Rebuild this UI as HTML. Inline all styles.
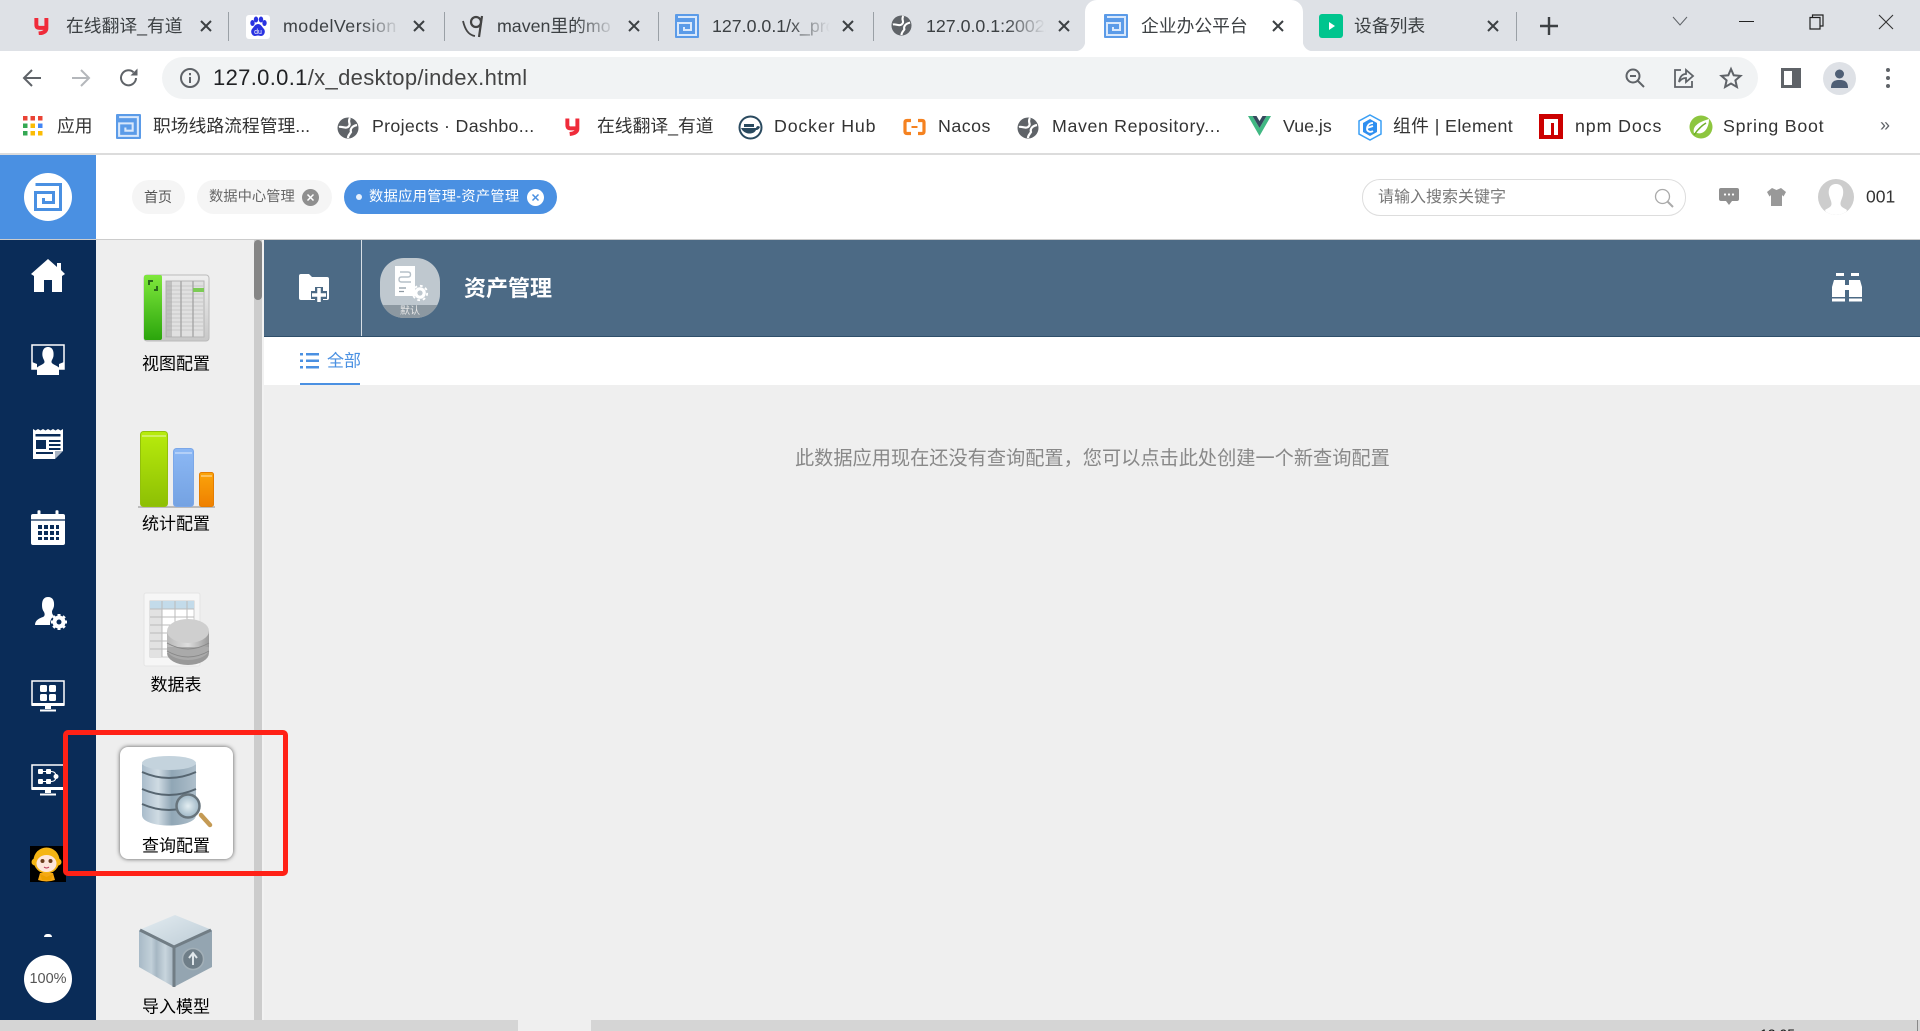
<!DOCTYPE html>
<html lang="zh">
<head>
<meta charset="utf-8">
<title>企业办公平台</title>
<style>
html,body{margin:0;padding:0;width:1920px;height:1031px;overflow:hidden;background:#efefef;}
body{position:relative;font-family:"Liberation Sans","Noto Sans CJK SC",sans-serif;color:#333;}
.a{position:absolute;}
.t{position:absolute;white-space:nowrap;line-height:1;transform:translateY(-50%);}
.tab{font-size:17.800px;color:#3c4043;top:27px;}
.bm{font-size:17.800px;color:#333;top:127px;}
.x{position:absolute;top:18px;width:16px;height:16px;}
.sep{position:absolute;top:12px;width:1px;height:29px;background:#9aa0a6;}
.lb{position:absolute;left:97px;width:158px;text-align:center;font-size:17px;line-height:1;color:#000;transform:translateY(-50%);white-space:nowrap;}
svg{position:absolute;display:block;overflow:visible;}
.fade{position:absolute;top:12px;height:30px;width:40px;background:linear-gradient(90deg,rgba(222,225,230,0),#dee1e6);}
</style>
</head>
<body>
<svg width="0" height="0" style="position:absolute">
<defs>
<symbol id="closex" viewBox="0 0 16 16"><path d="M3 3L13 13M13 3L3 13" stroke="#3c4043" stroke-width="2" fill="none"/></symbol>
<symbol id="o2" viewBox="0 0 24 24"><rect width="24" height="24" fill="#5b9be8" rx="1"/><path d="M3 3H21V21H3V9H16V16H9V13" fill="none" stroke="#d9e8fb" stroke-width="2"/></symbol>
<symbol id="globe" viewBox="0 0 22 22"><circle cx="11" cy="11" r="10.500" fill="#5f6368"/><path d="M13 1C10 5 15 7 11 10C8 12 5 9 2 10M20 8C15 9 13 12 14 15C13 17 11 18 11 21" fill="none" stroke="#fff" stroke-width="2.200"/></symbol>
<symbol id="yd" viewBox="0 0 16 19"><path d="M2.500 1V8Q2.500 11.500 6 11.500H13M13.200 1V12Q13.200 16.500 5 17.500" fill="none" stroke="#ef2b3a" stroke-width="4.200"/></symbol>
</defs>
</svg>

<!-- tab strip -->
<div class="a" style="left:0;top:0;width:1920px;height:51px;background:#dee1e6"></div>
<div class="a" style="left:1085px;top:0;width:218px;height:52px;background:#fff;border-radius:12px 12px 0 0"></div>
<div class="a" style="left:1075px;top:41px;width:10px;height:10px;background:radial-gradient(circle at 0 0,#dee1e6 10px,#fff 10.500px)"></div>
<div class="a" style="left:1303px;top:41px;width:10px;height:10px;background:radial-gradient(circle at 100% 0,#dee1e6 10px,#fff 10.500px)"></div>
<div class="sep" style="left:228px"></div><div class="sep" style="left:444px"></div><div class="sep" style="left:658px"></div><div class="sep" style="left:873px"></div><div class="sep" style="left:1516px"></div>

<svg style="left:34px;top:17px" width="15" height="18"><use href="#yd" width="15" height="18"/></svg>
<div class="t tab" style="left:66px">在线翻译_有道</div>
<svg class="x" style="left:198px"><use href="#closex" width="16" height="16"/></svg>

<svg style="left:246px;top:15px" width="24" height="24" viewBox="0 0 24 24"><rect width="24" height="24" rx="3" fill="#fff"/><g fill="#2932e1"><ellipse cx="6.500" cy="8" rx="2.200" ry="3"/><ellipse cx="10" cy="4.500" rx="2.200" ry="3"/><ellipse cx="15" cy="4.500" rx="2.200" ry="3"/><ellipse cx="18.500" cy="8" rx="2.200" ry="3"/><path d="M12 9c3 0 4 3 6 5 2 3 0 7-3 7-1 0-2-.5-3-.5S10 21 9 21c-3 0-5-4-3-7 2-2 3-5 6-5z"/></g><text x="12" y="19" font-size="7" fill="#fff" text-anchor="middle" font-family="Liberation Sans">du</text></svg>
<div class="t tab" style="left:283px;width:118px;overflow:hidden;padding:2px 0;letter-spacing:.5px">modelVersion</div>
<div class="fade" style="left:361px"></div>
<svg class="x" style="left:411px"><use href="#closex" width="16" height="16"/></svg>

<svg style="left:462px;top:14px" width="22" height="25" viewBox="0 0 22 25"><path d="M1 7C3 15 6 21 13 22" fill="none" stroke="#444" stroke-width="1.800"/><circle cx="14" cy="8" r="5" fill="none" stroke="#444" stroke-width="2.200"/><path d="M20 2L17 23" fill="none" stroke="#444" stroke-width="2.200"/></svg>
<div class="t tab" style="left:497px;width:118px;overflow:hidden;padding:2px 0">maven里的mo</div>
<div class="fade" style="left:576px"></div>
<svg class="x" style="left:626px"><use href="#closex" width="16" height="16"/></svg>

<svg style="left:675px;top:14px" width="24" height="24"><use href="#o2" width="24" height="24"/></svg>
<div class="t tab" style="left:712px;width:118px;overflow:hidden;padding:2px 0">127.0.0.1/x_pro</div>
<div class="fade" style="left:790px"></div>
<svg class="x" style="left:840px"><use href="#closex" width="16" height="16"/></svg>

<svg style="left:891px;top:15px" width="21" height="21"><use href="#globe" width="21" height="21"/></svg>
<div class="t tab" style="left:926px;width:120px;overflow:hidden;padding:2px 0">127.0.0.1:2002/</div>
<div class="fade" style="left:1006px"></div>
<svg class="x" style="left:1056px"><use href="#closex" width="16" height="16"/></svg>

<svg style="left:1104px;top:14px" width="24" height="24"><use href="#o2" width="24" height="24"/></svg>
<div class="t tab" style="left:1141px">企业办公平台</div>
<svg class="x" style="left:1270px"><use href="#closex" width="16" height="16"/></svg>

<svg style="left:1319px;top:14px" width="24" height="24" viewBox="0 0 24 24"><rect width="24" height="24" rx="3" fill="#00c58e"/><path d="M10 8L16 12L10 16Z" fill="#fff"/></svg>
<div class="t tab" style="left:1354px">设备列表</div>
<svg class="x" style="left:1485px"><use href="#closex" width="16" height="16"/></svg>

<svg style="left:1540px;top:17px" width="18" height="18"><path d="M9 0V18M0 9H18" stroke="#3c4043" stroke-width="2.400"/></svg>
<svg style="left:1672px;top:16px" width="16" height="10"><path d="M1 1L8 9L15 1" fill="none" stroke="#5f6368" stroke-width="1"/></svg>
<div class="a" style="left:1739px;top:21px;width:15px;height:1px;background:#222"></div>
<svg style="left:1809px;top:14px" width="16" height="16"><path d="M3.500 3V1H14V12H11.500M1 3.500H11V15H1Z" fill="none" stroke="#222" stroke-width="1.200"/></svg>
<svg style="left:1878px;top:14px" width="16" height="16"><path d="M1 1L15 15M15 1L1 15" stroke="#333" stroke-width="1.100"/></svg>

<!-- toolbar -->
<div class="a" style="left:0;top:51px;width:1920px;height:102px;background:#fff"></div>
<svg style="left:22px;top:68px" width="20" height="20"><path d="M19 10H3M10 2L2 10L10 18" fill="none" stroke="#5f6368" stroke-width="2"/></svg>
<svg style="left:71px;top:68px" width="20" height="20"><path d="M1 10H17M10 2L18 10L10 18" fill="none" stroke="#b4b7bb" stroke-width="2"/></svg>
<svg style="left:119px;top:68px" width="20" height="20"><path d="M17 10A7.500 7.500 0 1 1 14.500 4.200" fill="none" stroke="#5f6368" stroke-width="2"/><path d="M11.500 7.500H18.500V0.500Z" fill="#5f6368"/></svg>
<div class="a" style="left:162px;top:57px;width:1596px;height:42px;border-radius:21px;background:#f1f3f4"></div>
<svg style="left:179px;top:67px" width="22" height="22"><circle cx="11" cy="11" r="9" fill="none" stroke="#5f6368" stroke-width="2"/><path d="M11 10V16M11 6V8.200" stroke="#5f6368" stroke-width="2"/></svg>
<div class="t" style="left:213px;top:78px;font-size:22px;color:#202124;letter-spacing:.33px">127.0.0.1<span style="color:#444">/x_desktop/index.html</span></div>
<svg style="left:1625px;top:68px" width="20" height="20"><circle cx="8" cy="8" r="6.500" fill="none" stroke="#5f6368" stroke-width="2"/><path d="M13 13L19 19M5 8H11" stroke="#5f6368" stroke-width="2"/></svg>
<svg style="left:1673px;top:67px" width="22" height="22"><path d="M8 3H2V20H19V14" fill="none" stroke="#5f6368" stroke-width="1.800"/><path d="M6 15C7 9 10 7 13 7V3L20 9L13 15V11C10 11 8 12 6 15Z" fill="none" stroke="#5f6368" stroke-width="1.800"/></svg>
<svg style="left:1720px;top:67px" width="22" height="22"><path d="M11 2L13.700 8.300L20.500 8.900L15.400 13.400L16.900 20L11 16.500L5.100 20L6.600 13.400L1.500 8.900L8.300 8.300Z" fill="none" stroke="#5f6368" stroke-width="2"/></svg>
<div class="a" style="left:1781px;top:68px;width:20px;height:20px;box-sizing:border-box;background:#5f6368;border:3px solid #5f6368"><div style="width:8px;height:14px;background:#fff"></div></div>
<div class="a" style="left:1823px;top:62px;width:33px;height:33px;border-radius:50%;background:#dee1e6"></div>
<svg style="left:1829px;top:68px" width="21" height="21"><circle cx="10.500" cy="6" r="4.500" fill="#4f5f75"/><path d="M2 20C2 13 6 12 10.500 12S19 13 19 20Z" fill="#4f5f75"/></svg>
<svg style="left:1884px;top:67px" width="8" height="22"><circle cx="4" cy="3" r="2" fill="#5f6368"/><circle cx="4" cy="11" r="2" fill="#5f6368"/><circle cx="4" cy="19" r="2" fill="#5f6368"/></svg>

<!-- bookmarks -->
<svg style="left:23px;top:116px" width="20" height="20"><g><rect x="0" y="0" width="4.500" height="4.500" fill="#ea4335"/><rect x="7.500" y="0" width="4.500" height="4.500" fill="#ea4335"/><rect x="15" y="0" width="4.500" height="4.500" fill="#ea4335"/><rect x="0" y="7.500" width="4.500" height="4.500" fill="#34a853"/><rect x="7.500" y="7.500" width="4.500" height="4.500" fill="#fbbc05"/><rect x="15" y="7.500" width="4.500" height="4.500" fill="#4285f4"/><rect x="0" y="15" width="4.500" height="4.500" fill="#34a853"/><rect x="7.500" y="15" width="4.500" height="4.500" fill="#fbbc05"/><rect x="15" y="15" width="4.500" height="4.500" fill="#fbbc05"/></g></svg>
<div class="t bm" style="left:57px">应用</div>
<svg style="left:116px;top:114px" width="25" height="25"><use href="#o2" width="25" height="25"/></svg>
<div class="t bm" style="left:153px">职场线路流程管理...</div>
<svg style="left:337px;top:117px" width="22" height="22"><use href="#globe" width="22" height="22"/></svg>
<div class="t bm" style="left:372px;letter-spacing:.32px">Projects · Dashbo...</div>
<svg style="left:565px;top:117px" width="15" height="19"><use href="#yd" width="15" height="19"/></svg>
<div class="t bm" style="left:597px">在线翻译_有道</div>
<svg style="left:738px;top:115px" width="25" height="25" viewBox="0 0 25 25"><circle cx="12.500" cy="12.500" r="12" fill="#2a4a5f"/><circle cx="12.500" cy="12.500" r="10" fill="#fff"/><path d="M3 13H18C19 10 21 11 22 12C21 14 20 15 18 15C16 20 6 20 3 13Z" fill="#2a4a5f"/><path d="M6 9H16V12H6Z" fill="#2a4a5f"/></svg>
<div class="t bm" style="left:774px;letter-spacing:.85px">Docker Hub</div>
<svg style="left:903px;top:118px" width="23" height="18" viewBox="0 0 23 18"><path d="M8 2.500H4Q2 2.500 2 4.500V13.500Q2 15.500 4 15.500H8M15 2.500H19Q21 2.500 21 4.500V13.500Q21 15.500 19 15.500H15" fill="none" stroke="#f58220" stroke-width="3.200"/><path d="M8.500 9H14.500" stroke="#f58220" stroke-width="2"/></svg>
<div class="t bm" style="left:938px;letter-spacing:.5px">Nacos</div>
<svg style="left:1017px;top:117px" width="22" height="22"><use href="#globe" width="22" height="22"/></svg>
<div class="t bm" style="left:1052px;letter-spacing:.64px">Maven Repository...</div>
<svg style="left:1248px;top:116px" width="23" height="20" viewBox="0 0 23 20"><path d="M0 0L11.500 20L23 0H18.500L11.500 12L4.500 0Z" fill="#41b883"/><path d="M4.500 0L11.500 12L18.500 0H14.500L11.500 5L8.500 0Z" fill="#35495e"/></svg>
<div class="t bm" style="left:1283px">Vue.js</div>
<svg style="left:1358px;top:114px" width="24" height="27" viewBox="0 0 24 27"><path d="M12 1L23 7V20L12 26L1 20V7Z" fill="#fff" stroke="#3a9ff5" stroke-width="1.500"/><path d="M12 5L19 9V18L12 22L5 18V9Z" fill="#2f8ff0"/><path d="M15 9C10 9 9 13 9 15S12 19 15 17M9 14L15 12" fill="none" stroke="#fff" stroke-width="1.800"/></svg>
<div class="t bm" style="left:1393px;letter-spacing:.4px">组件 | Element</div>
<svg style="left:1539px;top:114px" width="24" height="25" viewBox="0 0 24 25"><rect width="24" height="25" fill="#c00"/><path d="M5 5H19V21H15V9H12V21H5Z" fill="#fff"/></svg>
<div class="t bm" style="left:1575px;letter-spacing:.9px">npm Docs</div>
<svg style="left:1689px;top:115px" width="24" height="24" viewBox="0 0 24 24"><circle cx="12" cy="12" r="11.500" fill="#8dc63f"/><path d="M5 18C3 11 10 7 20 4C20 13 15 20 8 18Z" fill="#fff"/><path d="M5 20C9 14 12 11 17 8" stroke="#6fae2a" stroke-width="1.500" fill="none"/></svg>
<div class="t bm" style="left:1723px;letter-spacing:.77px">Spring Boot</div>
<div class="t" style="left:1880px;top:125px;font-size:18px;color:#5f6368">»</div>
<div class="a" style="left:0;top:153px;width:1920px;height:2px;background:#dcdcdc"></div>

<!-- app header -->
<div class="a" style="left:0;top:155px;width:1920px;height:84px;background:#fff"></div>
<div class="a" style="left:0;top:239px;width:1920px;height:1px;background:#ccc"></div>
<div class="a" style="left:0;top:155px;width:96px;height:84px;background:#4a90e2"></div>
<div class="a" style="left:24px;top:173px;width:48px;height:48px;border-radius:50%;background:#fff"></div>
<svg style="left:34px;top:183px" width="28" height="28" viewBox="0 0 28 28"><path d="M1.500 1.500H26.500V26.500H1.500V9.500H19.500V19.500H9.500V15" fill="none" stroke="#4a90e2" stroke-width="3"/></svg>

<div class="a" style="left:132px;top:180px;width:53px;height:34px;border-radius:17px;background:#f5f5f5"></div>
<div class="t" style="left:144px;top:197px;font-size:14px;color:#555">首页</div>
<div class="a" style="left:197px;top:180px;width:135px;height:34px;border-radius:17px;background:#f5f5f5"></div>
<div class="t" style="left:209px;top:197px;font-size:14.300px;color:#666">数据中心管理</div>
<div class="a" style="left:302px;top:189px;width:17px;height:17px;border-radius:50%;background:#8f8f8f"></div>
<svg style="left:307px;top:194px" width="7" height="7"><path d="M0.500 0.500L6.500 6.500M6.500 0.500L0.500 6.500" stroke="#fff" stroke-width="1.500"/></svg>
<div class="a" style="left:344px;top:180px;width:213px;height:34px;border-radius:17px;background:#4a90e2"></div>
<div class="a" style="left:356px;top:194px;width:6px;height:6px;border-radius:50%;background:#e6f0fc"></div>
<div class="t" style="left:369px;top:197px;font-size:14.300px;color:#fff;letter-spacing:.25px">数据应用管理-资产管理</div>
<div class="a" style="left:527px;top:189px;width:17px;height:17px;border-radius:50%;background:#fff"></div>
<svg style="left:532px;top:194px" width="7" height="7"><path d="M0.500 0.500L6.500 6.500M6.500 0.500L0.500 6.500" stroke="#4a90e2" stroke-width="1.500"/></svg>

<div class="a" style="left:1362px;top:179px;width:322px;height:35px;border:1px solid #ddd;border-radius:18px;background:#fff"></div>
<div class="t" style="left:1378px;top:198px;font-size:16px;color:#777">请输入搜索关键字</div>
<svg style="left:1654px;top:188px" width="20" height="20"><circle cx="8.500" cy="8.500" r="7" fill="none" stroke="#aaa" stroke-width="1.300"/><path d="M13.500 13.500L19 19" stroke="#aaa" stroke-width="2"/></svg>
<svg style="left:1719px;top:188px" width="20" height="18" viewBox="0 0 20 18"><path d="M2 0H18Q20 0 20 2V11Q20 13 18 13H13L10 17L7 13H2Q0 13 0 11V2Q0 0 2 0Z" fill="#8f8f8f"/><circle cx="6" cy="6.500" r="1.100" fill="#fff"/><circle cx="10" cy="6.500" r="1.100" fill="#fff"/><circle cx="14" cy="6.500" r="1.100" fill="#fff"/></svg>
<svg style="left:1767px;top:188px" width="19" height="18" viewBox="0 0 19 18"><path d="M5 0L9.500 2L14 0L19 4L16.500 8.500L15 7V18H4V7L2.500 8.500L0 4Z" fill="#999"/></svg>
<div class="a" style="left:1818px;top:179px;width:36px;height:36px;border-radius:50%;background:#cdcdcd;overflow:hidden">
  <svg style="left:0;top:0" width="36" height="36" viewBox="0 0 36 36"><path d="M18 5C24 5 26 10 25 16C24 20 22.500 22 22.500 25C22.500 28 26 29 29 31L27 36H9L7 31C10 29 13.500 28 13.500 25C13.500 22 12 20 11 16C10 10 12 5 18 5Z" fill="#fff"/></svg>
</div>
<div class="t" style="left:1866px;top:197px;font-size:17.500px;color:#333">001</div>

<!-- left nav -->
<div class="a" style="left:0;top:240px;width:96px;height:780px;background:#0a2c58"></div>
<svg style="left:31px;top:258px" width="34" height="34" viewBox="0 0 34 34"><path d="M17 1L26 9V5H30V12L34 16L31 18V34H21V22H13V34H3V18L0 16Z" fill="#fff"/></svg>
<svg style="left:31px;top:344px" width="34" height="32" viewBox="0 0 34 32"><path d="M1 1H33V25H1Z" fill="none" stroke="#fff" stroke-width="1.500"/><path d="M17 3C22 3 23 8 22.500 12C22 15 20.500 16 20.500 18C20.500 20 25 21 28 23.500V31H6V23.500C9 21 13.500 20 13.500 18C13.500 16 12 15 11.500 12C11 8 12 3 17 3Z" fill="#fff"/><path d="M1 18V25H6V20ZM33 18V25H28V20Z" fill="#fff"/></svg>
<svg style="left:33px;top:429px" width="30" height="30" viewBox="0 0 30 30"><path d="M0 0L2.500 1.500L5 0L7.500 1.500L10 0L12.500 1.500L15 0L17.500 1.500L20 0L22.500 1.500L25 0L27.500 1.500L30 0V22L22 30H0Z" fill="#fff"/><path d="M2.500 5H27.500V7.500H2.500ZM16 11H27.500V13H16ZM16 15H27.500V17H16ZM16 19H27.500V21H16ZM3 23H20V25H3Z" fill="#0a2c58"/><rect x="3" y="11" width="10" height="9" fill="#0a2c58"/><path d="M30 22L22 30V22Z" fill="#0a2c58" opacity=".35"/></svg>
<svg style="left:31px;top:510px" width="34" height="35" viewBox="0 0 34 35"><path d="M2 4H6.500V1C6.500 0 9.500 0 9.500 1V4H24.500V1C24.500 0 27.500 0 27.500 1V4H32Q34 4 34 6V33Q34 35 32 35H2Q0 35 0 33V6Q0 4 2 4Z" fill="#fff"/><path d="M0 10H34" stroke="#0a2c58" stroke-width="1.200"/><g fill="#0a2c58"><rect x="7" y="15" width="4" height="4"/><rect x="13" y="15" width="4" height="4"/><rect x="19" y="15" width="4" height="4"/><rect x="25" y="15" width="3" height="4"/><rect x="7" y="21" width="4" height="4"/><rect x="13" y="21" width="4" height="4"/><rect x="19" y="21" width="4" height="4"/><rect x="25" y="21" width="3" height="4"/><rect x="7" y="27" width="4" height="3"/><rect x="13" y="27" width="4" height="3"/><rect x="19" y="27" width="4" height="3"/><rect x="25" y="27" width="3" height="3"/></g></svg>
<svg style="left:35px;top:597px" width="32" height="33" viewBox="0 0 32 33"><path d="M13 0C18 0 19.500 4 19 9C18.500 12 17 13 17 15C17 17 18 18 19 19C16 21 15 24 15 28H0C0 23 5 21 8 20C10 19 10 17 9 15C7.500 13 7 11 7 8C7 3 9 0 13 0Z" fill="#fff"/><circle cx="24" cy="25" r="4.500" fill="none" stroke="#fff" stroke-width="4"/><g stroke="#fff" stroke-width="3"><path d="M24 17V20M24 30V33M16 25H19M29 25H32M18.300 19.300L20.400 21.400M27.600 28.600L29.700 30.700M29.700 19.300L27.600 21.400M20.400 28.600L18.300 30.700"/></g></svg>
<svg style="left:31px;top:680px" width="34" height="32" viewBox="0 0 34 32"><rect x="1" y="1" width="32" height="24" fill="none" stroke="#fff" stroke-width="1.500"/><path d="M1 23H33V26H1ZM14 26H20V29H14ZM9 29.500H25V31.500H9Z" fill="#fff"/><rect x="9" y="5" width="7" height="7" rx="1.500" fill="#fff"/><rect x="18" y="5" width="7" height="7" rx="1.500" fill="#fff"/><rect x="9" y="14" width="7" height="7" rx="1.500" fill="#fff"/><rect x="18" y="14" width="7" height="7" rx="1.500" fill="#fff"/></svg>
<svg style="left:31px;top:764px" width="34" height="32" viewBox="0 0 34 32"><rect x="1" y="1" width="32" height="24" fill="none" stroke="#fff" stroke-width="1.500"/><path d="M1 23H33V26H1ZM14 26H20V29H14ZM9 29.500H25V31.500H9Z" fill="#fff"/><rect x="7" y="5" width="5" height="5" rx="1" fill="#fff"/><rect x="15" y="5" width="5" height="5" rx="1" fill="#fff"/><rect x="7" y="15" width="5" height="5" rx="1" fill="#fff"/><rect x="15" y="15" width="5" height="5" rx="1" fill="#fff"/><circle cx="25" cy="12.500" r="2.500" fill="#fff"/><path d="M12 7.500H15M12 17.500H15M20 7.500C23 7.500 25 9 25 12.500C25 16 23 17.500 20 17.500" fill="none" stroke="#fff"/></svg>
<!-- monkey -->
<div class="a" style="left:30px;top:846px;width:36px;height:36px;background:#000"></div>
<svg style="left:30px;top:846px" width="33" height="36" viewBox="0 0 33 36"><circle cx="5" cy="16" r="3.500" fill="#f5b514"/><circle cx="28" cy="16" r="3.500" fill="#f5b514"/><ellipse cx="16.500" cy="14.500" rx="13" ry="13" fill="#f5b514"/><ellipse cx="16.500" cy="17.500" rx="10" ry="8.500" fill="#fde6dc"/><circle cx="12.500" cy="15" r="2" fill="#6a3c1c"/><circle cx="20.500" cy="15" r="2" fill="#6a3c1c"/><path d="M14 21Q16.500 23 19 21" stroke="#b35" fill="none"/><path d="M10 27H23L25 34Q16.500 37 8 34Z" fill="#f5a814"/><path d="M10 28L16.500 31L23 28L21 34H12Z" fill="#eda000"/></svg>
<div class="a" style="left:44px;top:934px;width:8px;height:3px;background:#fff;border-radius:4px 4px 0 0"></div>
<div class="a" style="left:24px;top:955px;width:48px;height:48px;border-radius:50%;background:#fff"></div>
<div class="t" style="left:24px;width:48px;text-align:center;top:979px;font-size:14.500px;color:#555">100%</div>

<!-- left panel -->
<div class="a" style="left:96px;top:240px;width:158px;height:780px;background:#eee"></div>
<div class="a" style="left:254px;top:240px;width:8px;height:780px;background:#ccc"></div>
<div class="a" style="left:254px;top:240px;width:8px;height:60px;background:#858585;border-radius:4px"></div>
<div class="a" style="left:262px;top:240px;width:2px;height:780px;background:#f2f2f2"></div>

<!-- view config icon -->
<svg style="left:144px;top:275px" width="66" height="68" viewBox="0 0 66 68">
<defs>
<linearGradient id="g1" x1="0" y1="0" x2="0" y2="1"><stop offset="0" stop-color="#7fe83c"/><stop offset="1" stop-color="#2ba50c"/></linearGradient>
<linearGradient id="g2" x1="0" y1="0" x2="0" y2="1"><stop offset="0" stop-color="#efefef"/><stop offset="1" stop-color="#c8c8c8"/></linearGradient>
</defs>
<rect x="0" y="0" width="65" height="66" rx="3" fill="url(#g2)" stroke="#bbb"/>
<rect x="0" y="0" width="18" height="65" rx="2" fill="url(#g1)"/>
<rect x="22" y="6" width="38" height="56" fill="#e0e0e0" stroke="#b5b5b5"/>
<g stroke="#c8c8c8"><path d="M22 11H60M22 15H60M22 19H60M22 23H60M22 27H60M22 31H60M22 35H60M22 39H60M22 43H60M22 47H60M22 51H60M22 55H60"/></g>
<rect x="22" y="6" width="6" height="56" fill="#aaa" opacity=".6"/>
<path d="M37 6V62M49 6V62" stroke="#aaa" stroke-width="1.500"/>
<rect x="49" y="13" width="11" height="4" fill="#7ccb55"/>
<path d="M5 10V6H9M13 11V15H10" fill="none" stroke="#2a6a1a" stroke-width="2"/>
</svg>
<div class="lb" style="top:364px">视图配置</div>

<!-- stats icon -->
<svg style="left:138px;top:430px" width="78" height="78" viewBox="0 0 78 78">
<defs>
<linearGradient id="s1" x1="0" y1="0" x2="0" y2="1"><stop offset="0" stop-color="#b8ec0c"/><stop offset="1" stop-color="#8dbf04"/></linearGradient>
<linearGradient id="s2" x1="0" y1="0" x2="0" y2="1"><stop offset="0" stop-color="#8cb8f5"/><stop offset="1" stop-color="#74a2e2"/></linearGradient>
<linearGradient id="s3" x1="0" y1="0" x2="0" y2="1"><stop offset="0" stop-color="#fba40a"/><stop offset="1" stop-color="#ef8000"/></linearGradient>
</defs>
<rect x="0" y="76" width="77" height="2" fill="#bbb"/>
<rect x="2.500" y="1.500" width="27" height="75" rx="3" fill="url(#s1)" stroke="#93c10a"/>
<rect x="35.500" y="18.500" width="20" height="58" rx="3" fill="url(#s2)" stroke="#7ba7e8"/>
<rect x="61.500" y="42.500" width="14" height="34" rx="2" fill="url(#s3)" stroke="#e57d00"/>
<path d="M4 6H28M37 23H54M63 46H74" stroke="#fff" stroke-opacity=".35" stroke-width="2"/>
</svg>
<div class="lb" style="top:524px">统计配置</div>

<!-- table icon -->
<svg style="left:144px;top:593px" width="68" height="76" viewBox="0 0 68 76">
<defs><linearGradient id="c1" x1="0" y1="0" x2="1" y2="0"><stop offset="0" stop-color="#b8b8b8"/><stop offset=".5" stop-color="#dedede"/><stop offset="1" stop-color="#999"/></linearGradient></defs>
<rect x="0" y="0" width="56" height="73" rx="2" fill="#f6f6f6" stroke="#e4e4e4"/>
<rect x="6" y="8" width="44" height="56" fill="#fff" stroke="#ccc"/>
<rect x="6" y="8" width="44" height="8" fill="#c3dbea"/>
<rect x="6" y="16" width="12" height="48" fill="#e2e2e2"/>
<g stroke="#bbb"><path d="M18 8V64M31 8V64M43 8V64M6 16H50M6 24H50M6 32H50M6 40H50M6 48H50M6 56H50"/></g>
<ellipse cx="44" cy="60" rx="21" ry="12" fill="#999"/><rect x="23" y="46" width="42" height="14" fill="url(#c1)"/><ellipse cx="44" cy="56" rx="21" ry="11" fill="#aaa"/><rect x="23" y="38" width="42" height="16" fill="url(#c1)"/><ellipse cx="44" cy="38" rx="21" ry="12" fill="#cfcfcf"/>
<path d="M23 50Q44 62 65 50M23 58Q44 70 65 58" stroke="#888" fill="none"/>
</svg>
<div class="lb" style="top:685px">数据表</div>

<!-- selected card -->
<div class="a" style="left:120px;top:747px;width:113px;height:112px;background:#fff;border-radius:8px;box-shadow:0 0 4px #555"></div>
<svg style="left:141px;top:755px" width="74" height="72" viewBox="0 0 74 72">
<defs>
<linearGradient id="d1" x1="0" y1="0" x2="1" y2="0"><stop offset="0" stop-color="#a9bccb"/><stop offset=".3" stop-color="#cfdbe3"/><stop offset=".55" stop-color="#90a6b5"/><stop offset="1" stop-color="#aebfcb"/></linearGradient>
<radialGradient id="d2"><stop offset="0" stop-color="#e3eef2"/><stop offset="1" stop-color="#9fb7c6"/></radialGradient>
</defs>
<path d="M1 10C1 2 55 2 55 10V60C55 74 1 74 1 60Z" fill="url(#d1)"/>
<ellipse cx="28" cy="8" rx="27" ry="7" fill="#c4d3dd"/>
<path d="M1 17Q28 29 55 17M1 34Q28 46 55 34M1 49Q28 61 55 49" fill="none" stroke="#566570" stroke-width="2"/>
<path d="M60 60L69 70" stroke="#c49a54" stroke-width="4.500" stroke-linecap="round"/>
<circle cx="47" cy="51" r="11.500" fill="url(#d2)" stroke="#67747c" stroke-width="2.500"/>
</svg>
<div class="lb" style="top:846px">查询配置</div>

<!-- import icon -->
<svg style="left:139px;top:915px" width="73" height="73" viewBox="0 0 73 73">
<defs><linearGradient id="b1" x1="0" y1="0" x2="1" y2="0"><stop offset="0" stop-color="#a8bac7"/><stop offset=".35" stop-color="#c2d0d9"/><stop offset=".5" stop-color="#a6b7c3"/><stop offset=".75" stop-color="#c8d5dd"/><stop offset="1" stop-color="#a3b3bf"/></linearGradient>
<linearGradient id="b2" x1="0" y1="0" x2="1" y2="1"><stop offset="0" stop-color="#e3ecf1"/><stop offset="1" stop-color="#bccbd5"/></linearGradient></defs>
<path d="M36 0L73 15L35 32L0 15Z" fill="url(#b2)"/>
<path d="M0 15L35 32V72L0 52Z" fill="url(#b1)"/>
<path d="M35 32L73 15V52L35 72Z" fill="#94a5b1"/>
<path d="M1 15L35 32L72 15M35 32V72" fill="none" stroke="#717d85" stroke-width="3"/>
<circle cx="54" cy="44" r="10.500" fill="#6f7e88" stroke="#a3b0b8" stroke-width="1.500"/>
<path d="M54 50V39M50 43L54 38L58 43" stroke="#dfe6ea" stroke-width="2" fill="none"/>
</svg>
<div class="lb" style="top:1007px">导入模型</div>

<!-- content header -->
<div class="a" style="left:264px;top:240px;width:1656px;height:97px;background:#4c6a85;border-bottom:1px solid #2f4f6a;box-sizing:border-box"></div>
<div class="a" style="left:361px;top:240px;width:1px;height:96px;background:#d8dfe5"></div>
<svg style="left:299px;top:274px" width="30" height="29" viewBox="0 0 30 29"><path d="M2 0H10L13 3H28Q30 3 30 5V24Q30 26 28 26H2Q0 26 0 24V2Q0 0 2 0Z" fill="#fff"/><path d="M20 13V29M12 21H28" stroke="#4c6a85" stroke-width="8"/><path d="M20 14V28M13 21H27" stroke="#fff" stroke-width="3.500"/></svg>
<div class="a" style="left:380px;top:258px;width:60px;height:60px;border-radius:24px;background:#bfc8cf;overflow:hidden">
  <div class="a" style="left:0;top:47px;width:60px;height:13px;background:#8c98a1"></div>
  <div class="t" style="left:0;width:60px;text-align:center;top:54px;font-size:10px;color:#e6e6e6">默认</div>
  <svg style="left:15px;top:8px" width="36" height="38" viewBox="0 0 36 38"><rect x="0" y="0" width="20" height="30" fill="#fff"/><path d="M5 6H13Q15.500 6 15.500 8.500T13 11H6.500Q4 11 4 13.500T6.500 16H16" fill="none" stroke="#b6c0c8" stroke-width="1.400"/><path d="M4 22H11M4 25.500H9" stroke="#8e9aa3" stroke-width="1.300"/><circle cx="25" cy="27" r="4.200" fill="#bfc8cf" stroke="#fff" stroke-width="3.200"/><circle cx="25" cy="27" r="7.200" fill="none" stroke="#fff" stroke-width="1.800" stroke-dasharray="2.800 2.800"/></svg>
</div>
<div class="t" style="left:464px;top:289px;font-size:22px;font-weight:bold;color:#fff">资产管理</div>
<svg style="left:1832px;top:273px" width="30" height="29" viewBox="0 0 30 29"><path d="M4 0H12V3H4ZM19 0H27V3H19ZM2 7H13V12H17V7H28L30 14V24H17V17H13V24H0V14Z" fill="#fff"/><rect x="0" y="25.500" width="13" height="3" fill="#fff"/><rect x="17" y="25.500" width="13" height="3" fill="#fff"/></svg>

<!-- tab bar -->
<div class="a" style="left:264px;top:337px;width:1656px;height:48px;background:#fff"></div>
<svg style="left:300px;top:353px" width="19" height="16"><g fill="#4a90e2"><rect x="0" y="0" width="3" height="2.500"/><rect x="6" y="0" width="13" height="2.500"/><rect x="0" y="6.500" width="3" height="2.500"/><rect x="6" y="6.500" width="13" height="2.500"/><rect x="0" y="13" width="3" height="2.500"/><rect x="6" y="13" width="13" height="2.500"/></g></svg>
<div class="t" style="left:327px;top:361px;font-size:17px;color:#4a90e2">全部</div>
<div class="a" style="left:300px;top:383px;width:60px;height:2px;background:#4a90e2"></div>

<div class="t" style="left:795px;top:459px;font-size:19.200px;color:#888">此数据应用现在还没有查询配置，您可以点击此处创建一个新查询配置</div>

<!-- red annotation -->
<div class="a" style="left:63px;top:730px;width:225px;height:146px;box-sizing:border-box;border:5px solid #ff2116;border-radius:5px"></div>

<!-- bottom bar -->
<div class="a" style="left:0;top:1020px;width:1920px;height:11px;background:#d5d5d5;overflow:hidden">
  <div class="a" style="left:518px;top:0;width:73px;height:11px;background:#efefef"></div>
  <div class="a" style="left:1917px;top:0;width:1px;height:11px;background:#888"></div>
  <div class="a" style="left:1760px;top:6px;font-size:14px;line-height:16px;color:#111;white-space:nowrap">12:05</div>
</div>
</body>
</html>
